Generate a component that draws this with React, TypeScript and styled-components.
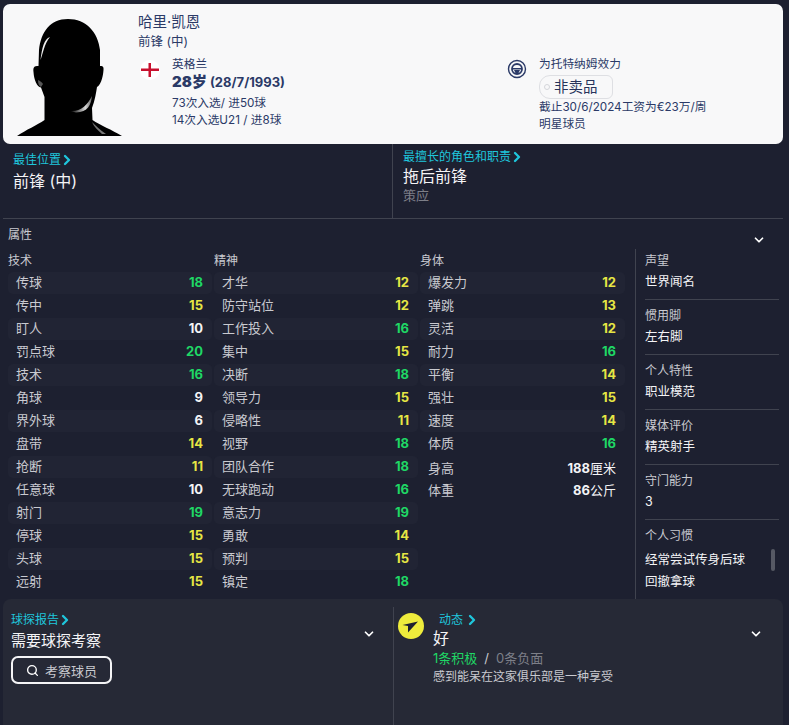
import { ReactNode } from 'react'
import styled, { createGlobalStyle } from 'styled-components'
import { ChevronDown, ChevronRight, Search } from 'lucide-react'

const colors = {
  page: '#1d2030',
  panel: '#262936',
  stripe: '#212434',
  card: '#f8f8f9',
  navy: '#2b3a67',
  cyan: '#1fc6dc',
  green: '#1fd765',
  yellow: '#e6e644',
  badge: '#eeec3c',
  white: '#f4f4f6',
  muted: '#c9cad0',
  dim: '#7d7f88',
  line: '#40434f'
}

const GlobalStyle = createGlobalStyle`
  html, body {
    margin: 0;
    padding: 0;
    background: ${colors.page};
  }
  body {
    font-family: Inter, "Noto Sans CJK SC", sans-serif;
    color: ${colors.white};
  }
`

const Page = styled.div`
  width: 789px;
  height: 725px;
  overflow: hidden;
  padding-top: 4px;
  box-sizing: border-box;
`

const Header = styled.header`
  display: flex;
  height: 140px;
  margin: 0 6px 0 3px;
  background: ${colors.card};
  border-radius: 7px;
  color: ${colors.navy};
  font-size: 12px;
`

const Photo = styled.svg`
  flex: none;
  width: 105px;
  height: 118px;
  margin: 14px 16px 0 14px;
  filter: blur(0.4px);
`

const Identity = styled.div`
  flex: none;
  width: 369px;
  padding-top: 8px;
`

const Name = styled.div`
  font-size: 14.5px;
  line-height: 20px;
`

const Position = styled.div`
  font-size: 12.5px;
  line-height: 20px;
`

const NationRow = styled.div`
  display: flex;
  margin-top: 4px;
`

const Flag = styled.svg`
  flex: none;
  width: 20px;
  height: 20px;
  margin: 4px 12px 0 2px;
`

const Line = styled.div`
  font-size: 11.7px;
  line-height: 17px;
  white-space: nowrap;
`

const Age = styled.div`
  font-size: 13px;
  font-weight: 700;
  line-height: 20px;
  margin: -1px 0 3px;

  b {
    font-size: 15px;
  }
`

const ClubRow = styled.div`
  display: flex;
  padding-top: 52px;
`

const ClubIcon = styled.svg`
  flex: none;
  width: 20px;
  height: 20px;
  margin: 3px 12px 0 0;
`

const SaleTag = styled.div`
  position: relative;
  width: 74px;
  height: 24px;
  margin: 2px 0 0;
  box-sizing: border-box;
  border: 1px solid #dedfe3;
  border-radius: 11px 6px 6px 11px;
  color: #27345c;
  font-size: 14.5px;
  line-height: 22px;
  padding-left: 14px;

  &::before {
    content: '';
    position: absolute;
    left: 4px;
    top: 8px;
    width: 4px;
    height: 4px;
    border: 1px solid #d5d6db;
    border-radius: 50%;
  }
`

const Roles = styled.section`
  display: grid;
  grid-template-columns: 389px 1fr;
  height: 74px;
  margin: 0 6px 0 3px;
  border-bottom: 1px solid ${colors.line};
  box-sizing: content-box;
`

const Role = styled.div<{ $top: number; $divider?: boolean }>`
  padding: ${p => p.$top}px 0 0 10px;
  ${p => p.$divider && `border-left: 1px solid ${colors.line};`}
`

const LinkLabel = styled.div<{ $gap?: number }>`
  display: flex;
  align-items: center;
  gap: ${p => p.$gap ?? 0}px;
  color: ${colors.cyan};
  font-size: 12px;
  line-height: 16px;
`

const LinkChevron = styled(ChevronRight).attrs({ size: 16, strokeWidth: 3.5 })`
  flex: none;
  margin: 0 -4px 0 -2px;
`

const RoleValue = styled.div<{ $size: number; $shift?: number }>`
  font-size: ${p => p.$size}px;
  line-height: 22px;
  margin-top: ${p => p.$shift ?? 0}px;
`

const RoleHint = styled.div`
  color: ${colors.dim};
  font-size: 13px;
  line-height: 14px;
  margin-top: 1px;
`

const AttributesBar = styled.div`
  display: flex;
  align-items: flex-start;
  justify-content: space-between;
  height: 30px;
  padding: 7px 23px 0 8px;
  box-sizing: border-box;
  font-size: 12px;
  line-height: 17px;
  color: ${colors.muted};

  svg {
    margin-top: 7px;
  }
`

const Main = styled.main`
  display: flex;
  height: 350px;
`

const Columns = styled.div`
  display: grid;
  grid-template-columns: 204px 204px 205px;
  column-gap: 2px;
  flex: none;
  width: 635px;
  padding-left: 8px;
  box-sizing: border-box;
`

const ColumnTitle = styled.div`
  height: 23px;
  font-size: 12px;
  line-height: 24px;
  color: ${colors.muted};
`

const StatRow = styled.div<{ $striped: boolean }>`
  display: flex;
  justify-content: space-between;
  align-items: center;
  height: 22px;
  margin-bottom: 1px;
  padding: 0 9px 3px 8px;
  box-sizing: border-box;
  border-radius: 5px;
  background: ${p => (p.$striped ? colors.stripe : 'transparent')};
  font-size: 13px;
  color: ${colors.muted};
`

const StatValue = styled.span<{ $tone: string }>`
  color: ${p => p.$tone};
  font-weight: 700;
`

const MeasureBlock = styled.div`
  margin-top: 3px;
`

const MeasureRow = styled(StatRow)`
  margin-bottom: 0;
`

const MeasureValue = styled.span`
  color: ${colors.white};

  b {
    font-weight: 700;
  }
`

const Side = styled.aside`
  position: relative;
  flex: none;
  width: 134px;
  padding: 1px 0 0 9px;
  border-left: 1px solid ${colors.line};
`

const SideItem = styled.div`
  padding-bottom: 6px;
  margin-bottom: 5px;
  border-bottom: 1px solid ${colors.line};
  font-size: 12px;

  &:last-of-type {
    border-bottom: 0;
    padding-bottom: 0;
    margin-bottom: 0;
  }
`

const SideLabel = styled.div<{ $gap: number }>`
  color: ${colors.muted};
  line-height: 21px;
  margin-bottom: ${p => p.$gap}px;
`

const SideValue = styled.div`
  color: ${colors.white};
  font-size: 12.5px;
  line-height: 22px;
`

const ScrollThumb = styled.span`
  position: absolute;
  right: 4px;
  top: 300px;
  width: 4px;
  height: 22px;
  border-radius: 2px;
  background: #565964;
`

const Bottom = styled.footer`
  display: grid;
  grid-template-columns: 390px 1fr;
  height: 126px;
  margin: 0 6px 0 3px;
  padding-top: 8px;
  box-sizing: border-box;
  background: ${colors.panel};
  border-radius: 8px 8px 0 0;
`

const Pane = styled.div<{ $divider?: boolean }>`
  display: flex;
  justify-content: space-between;
  padding: 5px ${p => (p.$divider ? '20px' : '17px')} 0 ${p => (p.$divider ? '4px' : '8px')};
  ${p => p.$divider && `border-left: 1px solid ${colors.line};`}
`

const PaneChevron = styled(ChevronDown)`
  flex: none;
  margin-top: 15px;
`

const ScoutValue = styled.div`
  font-size: 15px;
  line-height: 22px;
  margin-top: 2px;
`

const ScoutButton = styled.button`
  display: flex;
  align-items: center;
  justify-content: center;
  gap: 6px;
  width: 101px;
  height: 28px;
  margin-top: 4px;
  padding: 0;
  background: transparent;
  border: 2px solid ${colors.white};
  border-radius: 7px;
  color: ${colors.muted};
  font-family: inherit;
  font-size: 13px;
`

const MoraleWrap = styled.div`
  display: flex;
`

const MoraleBadge = styled.svg`
  flex: none;
  width: 26px;
  height: 26px;
  margin: 1px 9px 0 0;
`

const MoraleTitle = styled(LinkLabel)`
  padding-left: 6px;
`

const MoraleValue = styled.div`
  font-size: 16px;
  line-height: 21px;
`

const MoraleCount = styled.div`
  display: flex;
  gap: 7px;
  font-size: 13px;
  line-height: 19px;
  color: ${colors.dim};
`

const Positive = styled.span`
  color: ${colors.green};
`

const Slash = styled.span`
  color: ${colors.muted};
`

const MoraleNote = styled.div`
  font-size: 12px;
  line-height: 18px;
  color: ${colors.muted};
`

type Stat = [string, number]

const technical: Stat[] = [
  ['传球', 18], ['传中', 15], ['盯人', 10], ['罚点球', 20], ['技术', 16], ['角球', 9], ['界外球', 6],
  ['盘带', 14], ['抢断', 11], ['任意球', 10], ['射门', 19], ['停球', 15], ['头球', 15], ['远射', 15]
]

const mental: Stat[] = [
  ['才华', 12], ['防守站位', 12], ['工作投入', 16], ['集中', 15], ['决断', 18], ['领导力', 15], ['侵略性', 11],
  ['视野', 18], ['团队合作', 18], ['无球跑动', 16], ['意志力', 19], ['勇敢', 14], ['预判', 15], ['镇定', 18]
]

const physical: Stat[] = [
  ['爆发力', 12], ['弹跳', 13], ['灵活', 12], ['耐力', 16], ['平衡', 14], ['强壮', 15], ['速度', 14], ['体质', 16]
]

const sideItems = [
  { label: '声望', values: ['世界闻名'] },
  { label: '惯用脚', values: ['左右脚'] },
  { label: '个人特性', values: ['职业模范'] },
  { label: '媒体评价', values: ['精英射手'] },
  { label: '守门能力', values: ['3'] },
  { label: '个人习惯', values: ['经常尝试传身后球', '回撤拿球'] }
]

function toneFor(value: number) {
  if (value >= 16) return colors.green
  if (value >= 11) return colors.yellow
  return colors.white
}

function StatColumn({ title, stats, children }: { title: string; stats: Stat[]; children?: ReactNode }) {
  return (
    <div>
      <ColumnTitle>{title}</ColumnTitle>
      {stats.map(([name, value], i) => (
        <StatRow key={name} $striped={i % 2 === 0}>
          <span>{name}</span>
          <StatValue $tone={toneFor(value)}>{value}</StatValue>
        </StatRow>
      ))}
      {children}
    </div>
  )
}

function Silhouette() {
  return (
    <Photo viewBox="17 18 105 118">
      <defs>
        <linearGradient id="neckShine" x1="0" y1="0" x2="1" y2="0">
          <stop offset="0" stopColor="#000" />
          <stop offset="0.7" stopColor="#d8d8d8" />
          <stop offset="1" stopColor="#666" />
        </linearGradient>
      </defs>
      <path
        d="M68 19C50 19 41 32 39 50L38.500 66C34 66 33 67 33.500 72C34 80 37 87 41 87.500L44.500 97L44.500 120C37 125 26 130 17 136L122 136C112 130 100 125 92.500 120L92 108C95 100 96 93 97 87C100 86 103 78 103.500 70C104 66 102 66 100 66L100 50C98 32 86 19 68 19Z"
        fill="#000"
      />
      <path d="M50 37C44 39 42 48 40.500 60C43 54 44 44 50 37Z" fill="#f0f0f0" />
      <path d="M70 111C80 112 87 106 92 96C91 105 88 112 76 112.500Z" fill="url(#neckShine)" />
      <path d="M38 80C40 81 42 82 43 84L41 87C39 86 38 84 38 80Z" fill="#555" />
      <path d="M92 122C96 126 100 130 106 134L102 134C98 130 94 127 92 122Z" fill="#777" />
    </Photo>
  )
}

export default function App() {
  return (
    <Page>
      <GlobalStyle />
      <Header>
        <Silhouette />
        <Identity>
          <Name>哈里·凯恩</Name>
          <Position>前锋 (中)</Position>
          <NationRow>
            <Flag viewBox="0 0 20 20">
              <circle cx="10" cy="10" r="10" fill="#fff" />
              <path d="M1 8.500H19V11H1ZM8.500 3H11V17H8.500Z" fill="#c8102e" />
            </Flag>
            <div>
              <Line>英格兰</Line>
              <Age>
                <b>28岁</b> (28/7/1993)
              </Age>
              <Line>73次入选/ 进50球</Line>
              <Line>14次入选U21 / 进8球</Line>
            </div>
          </NationRow>
        </Identity>
        <ClubRow>
          <ClubIcon viewBox="0 0 20 20">
            <circle cx="10" cy="10" r="8.500" fill="none" stroke={colors.navy} strokeWidth="1.400" />
            <circle cx="10" cy="10" r="5" fill="none" stroke={colors.navy} strokeWidth="1.800" />
            <path d="M5.500 9H14.500V10.400H5.500ZM7 11H13L11.500 14H8.500Z" fill={colors.navy} />
          </ClubIcon>
          <div>
            <Line>为托特纳姆效力</Line>
            <SaleTag>非卖品</SaleTag>
            <Line>截止30/6/2024工资为€23万/周</Line>
            <Line>明星球员</Line>
          </div>
        </ClubRow>
      </Header>

      <Roles>
        <Role $top={8}>
          <LinkLabel>
            最佳位置
            <LinkChevron />
          </LinkLabel>
          <RoleValue $size={16} $shift={2}>前锋 (中)</RoleValue>
        </Role>
        <Role $top={5} $divider>
          <LinkLabel>
            最擅长的角色和职责
            <LinkChevron />
          </LinkLabel>
          <RoleValue $size={16}>拖后前锋</RoleValue>
          <RoleHint>策应</RoleHint>
        </Role>
      </Roles>

      <AttributesBar>
        属性
        <ChevronDown size={14} strokeWidth={3} color="#fff" />
      </AttributesBar>

      <Main>
        <Columns>
          <StatColumn title="技术" stats={technical} />
          <StatColumn title="精神" stats={mental} />
          <StatColumn title="身体" stats={physical}>
            <MeasureBlock>
              <MeasureRow $striped={false}>
                <span>身高</span>
                <MeasureValue>
                  <b>188</b>厘米
                </MeasureValue>
              </MeasureRow>
              <MeasureRow $striped={false}>
                <span>体重</span>
                <MeasureValue>
                  <b>86</b>公斤
                </MeasureValue>
              </MeasureRow>
            </MeasureBlock>
          </StatColumn>
        </Columns>
        <Side>
          {sideItems.map((item, i) => (
            <SideItem key={item.label}>
              <SideLabel $gap={i === sideItems.length - 1 ? 3 : 0}>{item.label}</SideLabel>
              {item.values.map(value => (
                <SideValue key={value}>{value}</SideValue>
              ))}
            </SideItem>
          ))}
          <ScrollThumb />
        </Side>
      </Main>

      <Bottom>
        <Pane>
          <div>
            <LinkLabel>
              球探报告
              <LinkChevron />
            </LinkLabel>
            <ScoutValue>需要球探考察</ScoutValue>
            <ScoutButton type="button">
              <Search size={13} strokeWidth={2.5} color="#fff" />
              考察球员
            </ScoutButton>
          </div>
          <PaneChevron size={14} strokeWidth={3} color="#fff" />
        </Pane>
        <Pane $divider>
          <MoraleWrap>
            <MoraleBadge viewBox="0 0 26 26">
              <circle cx="13" cy="13" r="13" fill={colors.badge} />
              <path d="M4.500 12L20 8.500L10 19.500L10 13Z" fill="#1d2030" />
            </MoraleBadge>
            <div>
              <MoraleTitle $gap={3}>
                动态
                <LinkChevron />
              </MoraleTitle>
              <MoraleValue>好</MoraleValue>
              <MoraleCount>
                <Positive>1条积极</Positive>
                <Slash>/</Slash>
                <span>0条负面</span>
              </MoraleCount>
              <MoraleNote>感到能呆在这家俱乐部是一种享受</MoraleNote>
            </div>
          </MoraleWrap>
          <PaneChevron size={14} strokeWidth={3} color="#fff" />
        </Pane>
      </Bottom>
    </Page>
  )
}
